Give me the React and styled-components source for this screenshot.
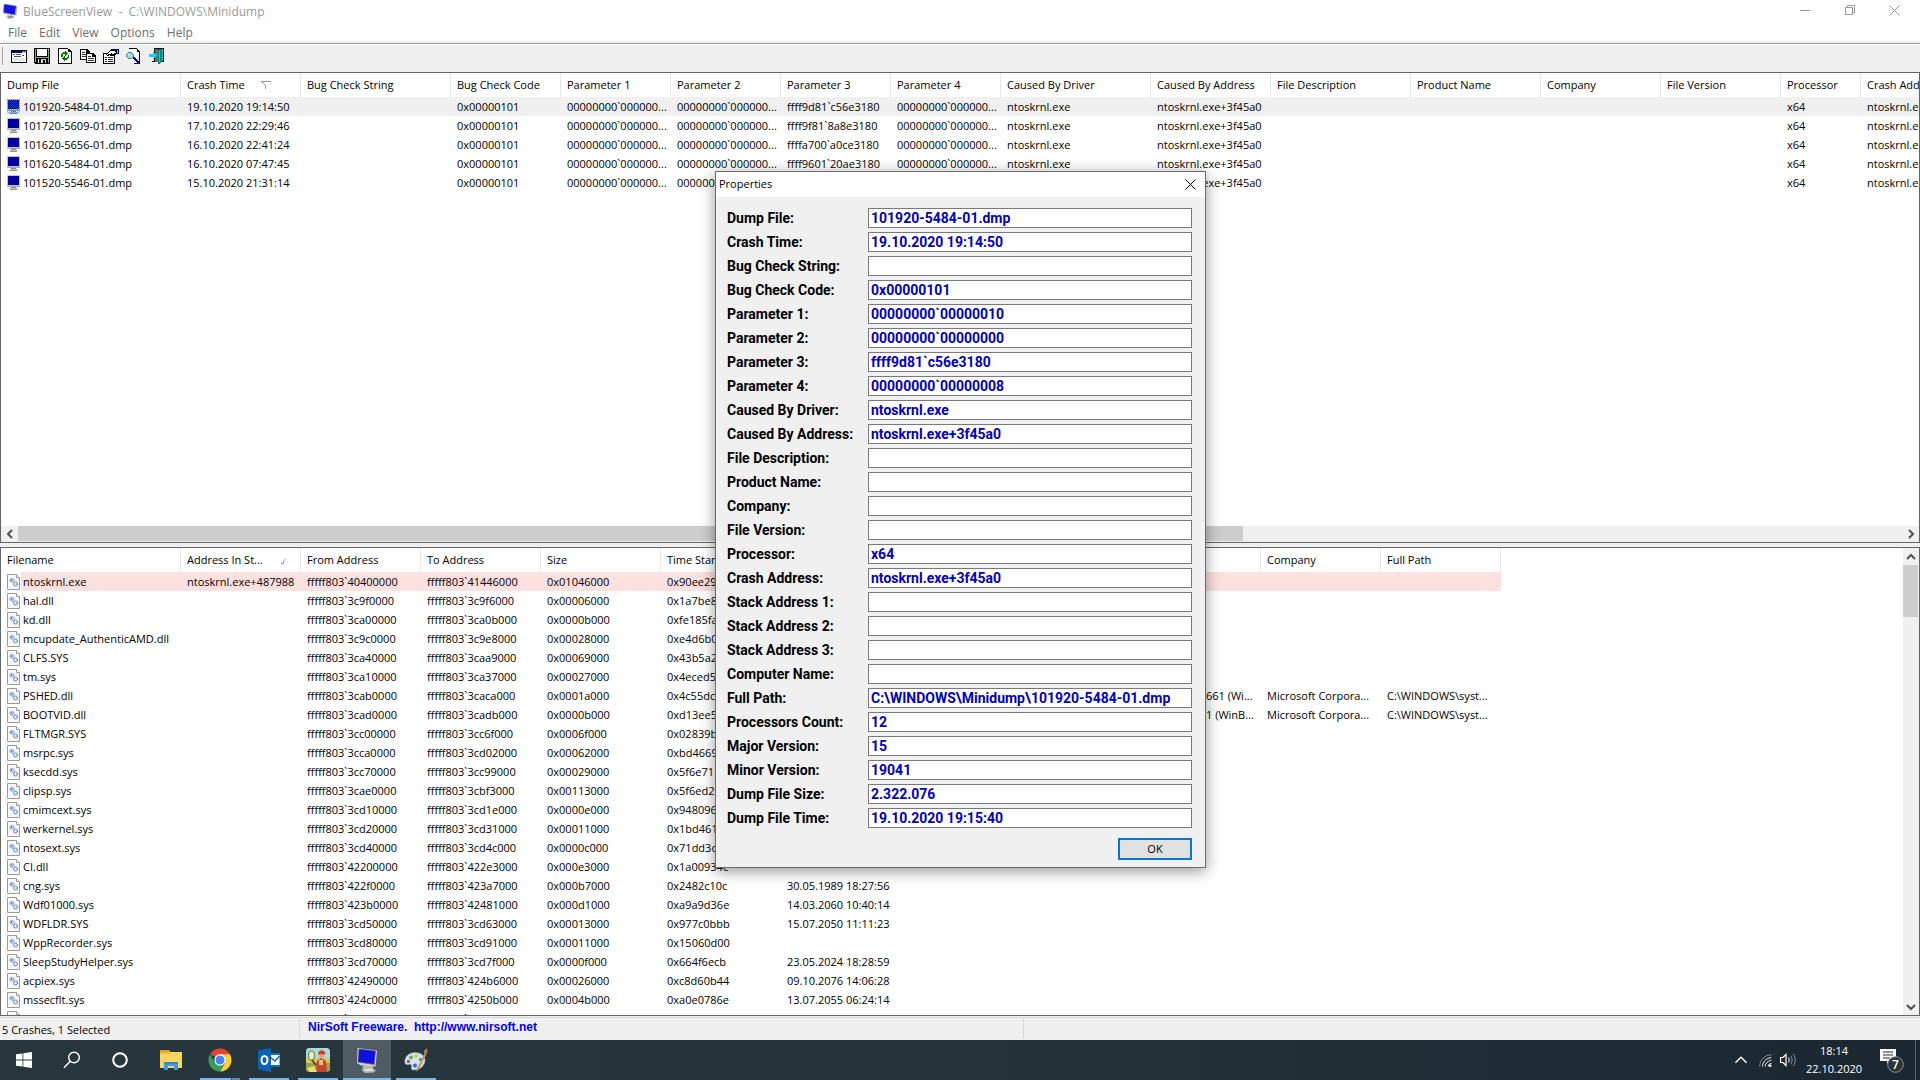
import React from 'react';
import styled, { createGlobalStyle, css } from 'styled-components';

const GlobalStyle = createGlobalStyle`
  *, *::before, *::after { box-sizing: border-box; }
  html, body { margin: 0; padding: 0; }
  body {
    font-family: "Open Sans", "Noto Sans", sans-serif;
    font-size: 11px;
    color: #000;
    background: #f0f0f0;
    overflow: hidden;
  }
  button, input { font: inherit; color: inherit; margin: 0; }
`;

const Screen = styled.div`
  display: flex;
  flex-direction: column;
  height: 100vh;
`;

const Desktop = styled.main`
  position: relative;
  flex: 1 1 0;
  min-height: 0;
  display: flex;
  flex-direction: column;
`;

const BareButton = styled.button`
  border: 0;
  padding: 0;
  background: transparent;
  display: flex;
  align-items: center;
  justify-content: center;
  flex: none;
`;

/* ---------- title bar, menu, toolbar ---------- */

const TitleBar = styled.header`
  display: flex;
  height: 24px;
  padding: 0 3px 0 2px;
  background: #fff;
`;

const TitleIcon = styled.span`
  display: flex;
  align-items: center;
  height: 22px;
`;

const TitleText = styled.h1`
  flex: 1;
  margin: 0;
  padding-left: 5px;
  font-size: 12px;
  line-height: 24px;
  font-weight: 400;
  color: #999;
  white-space: pre;
`;

const CaptionButton = styled(BareButton)`
  width: 45px;
  height: 20px;
`;

const MenuBar = styled.nav`
  display: flex;
  height: 17px;
  padding-left: 2px;
  background: #fff;
`;

const MenuItem = styled(BareButton)`
  padding: 0 6px;
  font-size: 12px;
  color: #6d6d6d;
`;

const ToolBar = styled.div`
  display: flex;
  align-items: center;
  height: 31px;
  padding: 1px 0 4px 2px;
  border-top: 2px solid #f0f0f0;
  background: #f0f0f0;
  box-shadow: inset 0 1px #a0a0a0, inset 0 2px #fff;
`;

const Grip = styled.span`
  width: 1px;
  height: 18px;
  margin-right: 4px;
  background: #a0a0a0;
`;

const ToolButton = styled(BareButton)`
  width: 23px;
  height: 22px;
`;

/* ---------- list panes ---------- */

const Pane = styled.section`
  display: flex;
  flex-direction: ${(p) => (p.$side ? 'row' : 'column')};
  flex: ${(p) => p.$share} 1 0;
  min-height: 0;
  background: #fff;
  border: 1px solid #646464;
`;

const Splitter = styled.div`
  flex: none;
  height: 4px;
  background: #f0f0f0;
`;

const ListArea = styled.div`
  flex: 1 1 0;
  min-width: 0;
  min-height: 0;
  overflow: hidden;
`;

const List = styled.table`
  table-layout: fixed;
  border-collapse: separate;
  border-spacing: 0;
  width: ${(p) => p.$width}px;
`;

const HeadCell = styled.th`
  height: 24px;
  padding: 0 6px;
  border-right: 1px solid #e5e5e5;
  font-weight: 400;
  text-align: left;
  line-height: 16px;
  white-space: nowrap;
`;

const SortMark = styled.svg`
  margin-left: 16px;
`;

const Row = styled.tr`
  background: ${(p) => p.$tint || '#fff'};
`;

const Cell = styled.td`
  height: 19px;
  padding: 0 0 0 6px;
  line-height: 19px;
  white-space: nowrap;
  overflow: hidden;
`;

const NameCell = styled(Cell)`
  padding: 0;
`;

const NameBox = styled.div`
  display: flex;
  gap: 2px;
  height: 19px;
`;

const IconBox = styled.span`
  display: flex;
  align-items: center;
  flex: none;
  width: 20px;
  padding-left: 6px;
  background: #fff;
`;

const ScrollTrack = styled.div`
  display: flex;
  flex: none;
  background: #f0f0f0;
  ${(p) => (p.$vertical
    ? css`flex-direction: column; width: 16px; padding-right: 1px;`
    : css`height: 16px; padding-bottom: 1px;`)}
`;

const ScrollButton = styled(BareButton)`
  width: ${(p) => (p.$vertical ? 15 : 17)}px;
  height: ${(p) => (p.$vertical ? 17 : 15)}px;
`;

const ScrollRun = styled.div`
  flex: 1;
  display: flex;
  flex-direction: ${(p) => (p.$vertical ? 'column' : 'row')};
`;

const ScrollThumb = styled.div`
  flex: 0 0 ${(p) => p.$size}%;
  background: #cdcdcd;
`;

/* ---------- status bar ---------- */

const StatusBar = styled.footer`
  display: flex;
  flex: none;
  height: 24px;
  padding-top: 3px;
  background: #f0f0f0;
  box-shadow: inset 0 1px #f0f0f0, inset 0 2px #d7d7d7;
`;

const StatusPart = styled.div`
  flex: ${(p) => (p.$width ? `0 0 ${p.$width}px` : '1 1 0')};
  height: 20px;
  padding-left: ${(p) => (p.$inset ? 8 : 2)}px;
  border-right: ${(p) => (p.$width ? '1px solid #d7d7d7' : '0')};
  line-height: 22px;
  white-space: nowrap;
`;

const HomeLink = styled.a`
  display: block;
  font: 700 12px/16px "Liberation Sans", Arial, sans-serif;
  color: #0000ff;
  text-decoration: none;
  white-space: pre;
`;

/* ---------- properties dialog ---------- */

const Overlay = styled.div`
  position: absolute;
  inset: 0;
  display: grid;
  place-items: center;
  padding: 0 0 1px 1px;
`;

const Dialog = styled.div`
  width: 491px;
  background: #f0f0f0;
  border: 1px solid #6b6b6b;
  box-shadow: 0 3px 14px rgba(0, 0, 0, 0.42);
`;

const DialogTitle = styled.div`
  display: flex;
  justify-content: space-between;
  height: 25px;
  padding: 0 3px;
  background: #fff;
`;

const DialogHeading = styled.h2`
  margin: 0;
  font-size: 11px;
  line-height: 24px;
  font-weight: 400;
`;

const CloseButton = styled(BareButton)`
  width: 24px;
  height: 24px;
`;

const Form = styled.form`
  display: flex;
  flex-direction: column;
  gap: 4px;
  padding: 11px 13px 7px 11px;
`;

const Field = styled.div`
  display: flex;
  align-items: center;
  height: 20px;
`;

const FieldLabel = styled.label`
  flex: 0 0 141px;
  font: 700 14px/20px Roboto, sans-serif;
  white-space: nowrap;
`;

const FieldInput = styled.input`
  flex: 1;
  min-width: 0;
  height: 20px;
  padding: 0 2px;
  border: 1px solid #7a7a7a;
  background: #fff;
  font: 700 14px/18px Roboto, sans-serif;
  color: #0000bf;
  outline: none;
`;

const OkButton = styled.button`
  align-self: flex-end;
  width: 74px;
  height: 22px;
  margin-top: 6px;
  padding: 0;
  border: 2px solid #0078d7;
  background: #e1e1e1;
  font-size: 11px;
  line-height: 18px;
`;

/* ---------- taskbar ---------- */

const TaskBar = styled.nav`
  display: flex;
  flex: none;
  height: 40px;
  background: linear-gradient(90deg, #28363e, #24323a 50%, #1b2831);
  color: #fff;
`;

const Apps = styled.div`
  display: flex;
  gap: 1px;
  margin-left: 3px;
  flex: 1;
`;

const TaskButton = styled(BareButton)`
  position: relative;
  width: 48px;
  height: 40px;
  background: ${(p) => (p.$active ? '#505c64' : 'transparent')};
  &::after {
    content: "";
    display: ${(p) => (p.$running || p.$active ? 'block' : 'none')};
    position: absolute;
    bottom: 0;
    left: ${(p) => (p.$active ? 0 : 4)}px;
    right: ${(p) => (p.$active ? 0 : 4)}px;
    height: 2px;
    background: ${(p) => (p.$stacked
      ? 'linear-gradient(90deg, #76b9ed 31px, #35536a 31px 32px, #5a8cb3 32px)'
      : '#76b9ed')};
  }
`;

const Tray = styled.div`
  display: flex;
  align-items: center;
`;

const TrayButton = styled(BareButton)`
  width: ${(p) => p.$width}px;
  height: 40px;
`;

const Clock = styled(BareButton)`
  flex-direction: column;
  width: 70px;
  height: 40px;
  line-height: 18px;
`;

const ShowDesktop = styled(BareButton)`
  width: 5px;
  height: 40px;
  border-left: 1px solid #5c6870;
`;

/* ---------- drawings ---------- */

const Px = ({ w = 16, h = 16, children }) => (
  <svg width={w} height={h} viewBox={`0 0 ${w} ${h}`} shapeRendering="crispEdges" aria-hidden="true">
    {children}
  </svg>
);

const AppIcon = ({ size = 16 }) => (
  <svg width={size} height={size} viewBox="0 0 16 16" aria-hidden="true">
    <path d="M5 12.500l5-.5 2 2.500-5 1.300-2.500-1z" fill="#b9b9b4" />
    <path d="M6 13.500l5-.6 1 1.400-5 1.200z" fill="#8b8b88" />
    <path d="M1.600 1.200L14 3l.8 9L3 11.600 1.200 10z" fill="#c8c8c4" />
    <path d="M2.200 1l12 2.100-1.400 8.800L1.500 9.600z" fill="#1414e6" stroke="#8a8aa0" strokeWidth=".5" />
    <path d="M14.300 3l.9.600-1.400 9-1-.700z" fill="#9b9b98" />
  </svg>
);

const DumpIcon = ({ dotted }) => (
  <Px w={13} h={15}>
    <rect width="13" height="12" fill="#c3c3bd" />
    <rect x="1" y="1" width="11" height="9" fill="#0000a0" />
    <rect x="0" y="11" width="13" height="1" fill="#a9a9a4" />
    <rect x="4" y="12" width="5" height="1" fill="#8c8c88" />
    <rect x="2" y="13" width="9" height="1" fill="#c3c3bd" />
    <rect x="3" y="14" width="7" height="1" fill="#94948f" />
    {dotted && Array.from({ length: 15 }, (_, y) =>
      Array.from({ length: 7 }, (_, x) => (
        <rect key={`${x}-${y}`} x={x * 2 + (y % 2)} y={y} width="1" height="1"
          fill="#0078d7" opacity="0.55" />
      )))}
  </Px>
);

const FileIcon = () => (
  <svg width="13" height="16" viewBox="0 0 13 16" aria-hidden="true">
    <path d="M.5.5h9l3 3v12H.5z" fill="#f8f8f8" stroke="#9a9a9a" />
    <path d="M9.500.5v3h3" fill="#fff" stroke="#9a9a9a" />
    <circle cx="5" cy="6.300" r="2" fill="#cfe0f4" stroke="#4a78b4" strokeDasharray="1 .6" />
    <circle cx="8.500" cy="10" r="2" fill="#cfe0f4" stroke="#2c5c9c" strokeDasharray="1.200 .5" />
    <circle cx="4.600" cy="6" r=".7" fill="#2c5c9c" />
    <circle cx="8.500" cy="10" r=".6" fill="#fff" />
  </svg>
);

const toolIcons = {
  'Advanced options': (
    <Px>
      <rect x="0" y="2" width="16" height="13" fill="#000" />
      <rect x="1" y="3" width="14" height="11" fill="#fff" />
      <rect x="1" y="3" width="10" height="2" fill="#000080" />
      <rect x="11" y="3" width="4" height="2" fill="#c0c0c0" />
      <path d="M11 3h1v1h-1zM13 3h1v1h-1z" fill="#000" />
      <path d="M2 6h2v1H2zM5 6h5v1H5zM11 7h2v1h-2zM3 8h7v1H3z" fill="#555" />
      <rect x="2" y="10" width="12" height="3" fill="#e8e8e8" />
      <path d="M1 9h14v1H1z" fill="#fff" />
    </Px>
  ),
  Save: (
    <Px>
      <path d="M0 0h16v16H1L0 15z" fill="#000" />
      <rect x="3" y="1" width="10" height="7" fill="#fff" />
      <path d="M1 1h1v13H1zM14 2h1v13h-1zM2 9h12v1H2z" fill="#999" />
      <rect x="4" y="11" width="8" height="4" fill="#d0d0d0" />
      <path d="M5 11h2v4H5zM9 12h2v3H9z" fill="#000" />
      <rect x="14" y="1" width="1" height="1" fill="#fff" />
    </Px>
  ),
  Refresh: (
    <Px w={14}>
      <path d="M1 0h9l3 3v13H1z" fill="#fff" />
      <path d="M1 0h9v1H1zM0 0h1v16H0zM0 15h13v1H0zM13 4h1v12h-1zM9 1h1v3h4V3h-1V2h-1V1h-2z" fill="#000" />
      <path d="M4 5h1V4h2V3h1v1h1v1h1v1H9v1H8v1H7V6H5v3H3V6h1z" fill="#007a00" />
      <path d="M10 7h1v3h-1v1H9v1H7v1H6v-1H5v-1H4v-1h1V9h1V8h1v2h2V9h1z" fill="#007a00" />
    </Px>
  ),
  Copy: (
    <Px>
      <path d="M0 1h7l3 3v8H0z" fill="#000" />
      <path d="M1 2h5v3h3v6H1z" fill="#fff" />
      <path d="M2 4h3v1H2zM2 6h5v1H2zM2 8h5v1H2z" fill="#333" />
      <path d="M6 5h7l3 3v7H6z" fill="#000" />
      <path d="M7 6h5v3h3v5H7z" fill="#fff" />
      <path d="M8 8h3v1H8zM8 10h6v1H8zM8 12h6v1H8z" fill="#333" />
    </Px>
  ),
  Properties: (
    <Px>
      <path d="M0 5h12v11H0z" fill="#000" />
      <path d="M1 6h10v9H1z" fill="#fff" />
      <path d="M2 9h2v1H2zM5 9h5v1H5zM2 11h2v1H2zM5 11h5v1H5zM2 13h2v1H2zM5 13h5v1H5z" fill="#222" />
      <path d="M3 6h1V5h1V4h1V3h1V2h1V1h5v1h2v4h-2v1h-2v1H7V7H6v1H4V7H3z" fill="#000" />
      <path d="M4 6h1V5h1V4h1V3h5v1h1v1h-2v1H9V5H8v1H5v1H4z" fill="#fff" />
      <path d="M13 1h3v5h-3z" fill="#000080" />
      <path d="M14 2h1v3h-1z" fill="#8fa0e8" />
    </Px>
  ),
  Find: (
    <Px>
      <path d="M3 0h8l3 3v12H3z" fill="#fff" />
      <path d="M3 0h8v1H3zM13 4h1v11h-1zM8 15h6v1H8zM10 1h1v3h3V3h-1V2h-1V1z" fill="#000" />
      <path d="M2 4h4v1h1v1h1v3H7v1H6v1H2v-1H1V9H0V6h1V5h1z" fill="#808080" />
      <path d="M2 5h4v1h1v3H6v1H2V9H1V6h1z" fill="#6fe4ea" />
      <path d="M3 6h1v1H3zM2 7h1v1H2zM5 7h1v1H5zM4 8h1v1H4z" fill="#fff" />
      <path d="M7 9h2v1h1v1h1v1h1v1h1v2h-2v-1h-1v-1H9v-1H8v-1H7z" fill="#0000c8" />
    </Px>
  ),
  Exit: (
    <Px>
      <path d="M5 0h10v14H5z" fill="#000" />
      <path d="M6 1h3v13H6z" fill="#6a6a6a" />
      <path d="M9 2h1V1h4v12h-1v1h-1v1h-1v1H9z" fill="#008a8a" />
      <path d="M10 3h1v11h-1zM13 1h1v12h-1z" fill="#30c0c0" />
      <path d="M0 6h4V4h1v1h1v1h1v1h1v1H7v1H6v1H5v1H4V9H0z" fill="#00e0e8" />
      <path d="M3 13h3v1H3z" fill="#000" />
    </Px>
  ),
};

const chevrons = {
  left: 'M7 1L3 5l4 4',
  right: 'M3 1l4 4-4 4',
  up: 'M1 7l4-4 4 4',
  down: 'M1 3l4 4 4-4',
};

const Chevron = ({ dir, ink = '#505050', size = 10, weight = 2 }) => (
  <svg width={size} height={size} viewBox="0 0 10 10" fill="none" stroke={ink} strokeWidth={weight} aria-hidden="true">
    <path d={chevrons[dir]} />
  </svg>
);

const Cross = ({ size, ink }) => (
  <svg width={size} height={size} viewBox="0 0 11 11" stroke={ink} fill="none" aria-hidden="true">
    <path d="M.5.5l10 10M10.500.5l-10 10" />
  </svg>
);

const StartGlyph = () => (
  <svg width="16" height="16" viewBox="0 0 16 16" fill="#fff" aria-hidden="true">
    <path d="M0 2.300L6.500 1.400v6.200H0zM7.300 1.300L16 0v7.600H7.300zM0 8.400h6.500v6.200L0 13.700zM7.300 8.400H16V16l-8.700-1.300z" />
  </svg>
);

const SearchGlyph = () => (
  <svg width="18" height="18" viewBox="0 0 18 18" fill="none" stroke="#fff" strokeWidth="1.400" aria-hidden="true">
    <circle cx="11" cy="6.500" r="5.300" />
    <path d="M7.200 10.300L1 16.800" />
  </svg>
);

const CortanaGlyph = () => (
  <svg width="16" height="16" viewBox="0 0 16 16" fill="none" stroke="#fff" strokeWidth="2" aria-hidden="true">
    <circle cx="8" cy="8" r="6.800" />
  </svg>
);

const ExplorerGlyph = () => (
  <svg width="22" height="20" viewBox="0 0 22 20" aria-hidden="true">
    <path d="M0 0h9l1.500 2H0z" fill="#e0a21c" />
    <path d="M0 2h22v16H0z" fill="#fcd462" />
    <path d="M0 2h9l2 2H0z" fill="#f0b93a" />
    <path d="M4 12h14v8h-4v-4H8v4H4z" fill="#3d9be0" />
    <path d="M4 12h14v2H4z" fill="#2f87cc" />
  </svg>
);

const ChromeGlyph = () => (
  <svg width="24" height="24" viewBox="0 0 24 24" aria-hidden="true">
    <path d="M12 12L2.040 6.250A11.500 11.500 0 0 1 21.960 6.250z" fill="#e24335" />
    <path d="M12 12V6.250h9.960A11.500 11.500 0 0 1 12 23.500l4.980-8.620z" fill="#fccd3a" />
    <path d="M12 12l4.980 2.880L12 23.500A11.500 11.500 0 0 1 2.040 6.250l4.980 8.620z" fill="#36a156" />
    <circle cx="12" cy="12" r="5.700" fill="#fff" />
    <circle cx="12" cy="12" r="4.500" fill="#4285f4" />
  </svg>
);

const OutlookGlyph = () => (
  <svg width="24" height="24" viewBox="0 0 24 24" aria-hidden="true">
    <path d="M12 5h11v14H12z" fill="#0f6cbd" />
    <path d="M13 7h9.500v10H13z" fill="#fff" />
    <path d="M13 9l5 4 4.500-5" fill="none" stroke="#0f6cbd" strokeWidth="1.600" />
    <path d="M1 2.500L14 0v24L1 21.500z" fill="#0a63b4" />
    <ellipse cx="7.500" cy="12" rx="3" ry="4" fill="none" stroke="#fff" strokeWidth="2" />
  </svg>
);

const GameGlyph = () => (
  <svg width="24" height="24" viewBox="0 0 24 24" aria-hidden="true">
    <rect width="24" height="24" rx="4" fill="#d9c46a" />
    <path d="M0 4a4 4 0 0 1 4-4h16a4 4 0 0 1 4 4v6H0z" fill="#a9dcd8" />
    <path d="M0 15h24v5a4 4 0 0 1-4 4H4a4 4 0 0 1-4-4z" fill="#8fa84a" />
    <path d="M10 24l1-11 4-3 5 3 1 11z" fill="#c8452c" />
    <circle cx="15.500" cy="6.500" r="3.200" fill="#e8a070" />
    <path d="M12 5.500c1-4.500 6.500-4.500 7.500 0l-1 .8h-5.500z" fill="#d23c1e" />
    <ellipse cx="5.500" cy="7.500" rx="3" ry="4.500" fill="#e8ecc0" stroke="#58702c" />
    <path d="M6 12l4 5" stroke="#7a3c20" strokeWidth="2" />
    <path d="M13 12h4v5h-4z" fill="#f0c08a" />
    <path d="M1 20l7-2 3 6H4z" fill="#e8e070" />
  </svg>
);

const BlueScreenGlyph = () => (
  <svg width="24" height="26" viewBox="0 0 24 26" aria-hidden="true">
    <path d="M8 19l10-1v4l3 1-2 2.500-9 .5-3-2.500z" fill="#b4b4ae" />
    <path d="M9 22l9-.5.5 2-8 1z" fill="#e0e0dc" />
    <path d="M2.500 1L22 3.500l-1.500 16L6 18.500 2 16z" fill="#d0d0ca" />
    <path d="M4 2l16.500 2-1.300 13.500L3 15z" fill="#1010e0" stroke="#60606c" strokeWidth=".6" />
  </svg>
);

const PaintGlyph = () => (
  <svg width="24" height="24" viewBox="0 0 24 24" aria-hidden="true">
    <path d="M11 4.500c6 0 10.500 3.500 10 8.500-.5 5-5.500 9-11 9-3 0-3-2-2.500-3.500.5-2-1-2.500-3-2C2 17 .5 16 .8 13 1.300 8 5.500 4.500 11 4.500z" fill="#cfe4f2" stroke="#7fa6bf" strokeWidth=".6" />
    <circle cx="7" cy="9.500" r="1.900" fill="#58b84c" />
    <circle cx="12" cy="8" r="1.900" fill="#f0c030" />
    <circle cx="4.500" cy="13.500" r="1.700" fill="#d8442c" />
    <circle cx="16.500" cy="11.500" r="1.700" fill="#4a8cd8" />
    <circle cx="11" cy="17.500" r="1.900" fill="#3068c0" />
    <path d="M20.500 5.500l1.700 1.200L14 22.500l-1.600.9.200-2z" fill="#d98a35" />
    <path d="M20 5.500c-.8-2 .5-4 3-5.500.8 3 .6 5.300-1 6.800z" fill="#a77a50" />
  </svg>
);

const WifiGlyph = () => (
  <svg width="13" height="13" viewBox="0 0 13 13" fill="none" stroke="#fff" aria-hidden="true">
    <path d="M.6 12.500A11.800 11.800 0 0 1 12.400.7" opacity=".45" />
    <path d="M3.500 12.500a9 9 0 0 1 8.900-8.900M6.300 12.500a6.200 6.200 0 0 1 6.100-6.100" opacity=".85" />
    <path d="M9.300 12.500a3.200 3.200 0 0 1 3.100-3.100" />
    <circle cx="11.300" cy="11.800" r="1.200" fill="#fff" stroke="none" />
  </svg>
);

const SpeakerGlyph = () => (
  <svg width="17" height="14" viewBox="0 0 17 14" fill="none" stroke="#fff" aria-hidden="true">
    <path d="M.6 4.500h2.400l3-3v11l-3-3H.6z" strokeWidth="1.200" />
    <path d="M8.300 4.500c1.200 1.600 1.200 3.400 0 5" />
    <path d="M10.600 2.800c2 2.600 2 5.800 0 8.400M13 1c3 3.600 3 8.400 0 12" opacity=".45" />
  </svg>
);

const NoticeGlyph = () => (
  <svg width="26" height="26" viewBox="0 0 26 26" aria-hidden="true">
    <path d="M1 2h16v12h-6l-3 3v-3H1z" fill="#fff" />
    <path d="M4 5h10M4 8h10M4 11h7" stroke="#1d2a32" />
    <circle cx="16.500" cy="17.500" r="7.800" fill="#2b3338" stroke="#8c959a" />
    <text x="16.500" y="22" textAnchor="middle" fontFamily="Open Sans, sans-serif" fontSize="12" fontWeight="600" fill="#fff">7</text>
  </svg>
);

/* ---------- data ---------- */

const crashColumns = [
  ['Dump File', 180], ['Crash Time', 120], ['Bug Check String', 150], ['Bug Check Code', 110],
  ['Parameter 1', 110], ['Parameter 2', 110], ['Parameter 3', 110], ['Parameter 4', 110],
  ['Caused By Driver', 150], ['Caused By Address', 120], ['File Description', 140],
  ['Product Name', 130], ['Company', 120], ['File Version', 120], ['Processor', 80], ['Crash Address', 120],
];

const crashes = [
  ['101920-5484-01.dmp', '19.10.2020 19:14:50', 'ffff9d81`c56e3180'],
  ['101720-5609-01.dmp', '17.10.2020 22:29:46', 'ffff9f81`8a8e3180'],
  ['101620-5656-01.dmp', '16.10.2020 22:41:24', 'ffffa700`a0ce3180'],
  ['101620-5484-01.dmp', '16.10.2020 07:47:45', 'ffff9601`20ae3180'],
  ['101520-5546-01.dmp', '15.10.2020 21:31:14', 'ffffb581`e1ce3180'],
].map(([name, time, third]) => [
  name, time, '', '0x00000101', '00000000`000000...', '00000000`000000...', third,
  '00000000`000000...', 'ntoskrnl.exe', 'ntoskrnl.exe+3f45a0', '', '', '', '', 'x64', 'ntoskrnl.exe+3f45a0',
]);

const moduleColumns = [
  ['Filename', 180], ['Address In St...', 120], ['From Address', 120], ['To Address', 120], ['Size', 120],
  ['Time Stamp', 120], ['Time String', 120], ['Product Name', 120], ['File Description', 120],
  ['File Version', 120], ['Company', 120], ['Full Path', 120],
];

const ms = 'Microsoft® Wind...';
const modules = [
  ['ntoskrnl.exe', 'ntoskrnl.exe+487988', '40400000', '41446000', '01046000', '90ee29c4'],
  ['hal.dll', '', '3c9f0000', '3c9f6000', '00006000', '1a7be8d2'],
  ['kd.dll', '', '3ca00000', '3ca0b000', '0000b000', 'fe185fa1'],
  ['mcupdate_AuthenticAMD.dll', '', '3c9c0000', '3c9e8000', '00028000', 'e4d6b031'],
  ['CLFS.SYS', '', '3ca40000', '3caa9000', '00069000', '43b5a2e1'],
  ['tm.sys', '', '3ca10000', '3ca37000', '00027000', '4eced5a7'],
  ['PSHED.dll', '', '3cab0000', '3caca000', '0001a000', '4c55dc10', '', ms, 'Platform Specifi...', '10.0.19041.661 (Wi...', 'Microsoft Corpora...', 'C:\\WINDOWS\\syst...'],
  ['BOOTVID.dll', '', '3cad0000', '3cadb000', '0000b000', 'd13ee5b2', '', ms, 'VGA Boot Driver', '10.0.19041.1 (WinB...', 'Microsoft Corpora...', 'C:\\WINDOWS\\syst...'],
  ['FLTMGR.SYS', '', '3cc00000', '3cc6f000', '0006f000', '02839b5c'],
  ['msrpc.sys', '', '3cca0000', '3cd02000', '00062000', 'bd466932'],
  ['ksecdd.sys', '', '3cc70000', '3cc99000', '00029000', '5f6e7117'],
  ['clipsp.sys', '', '3cae0000', '3cbf3000', '00113000', '5f6ed2fa'],
  ['cmimcext.sys', '', '3cd10000', '3cd1e000', '0000e000', '948096a3'],
  ['werkernel.sys', '', '3cd20000', '3cd31000', '00011000', '1bd46131'],
  ['ntosext.sys', '', '3cd40000', '3cd4c000', '0000c000', '71dd3c5e'],
  ['CI.dll', '', '42200000', '422e3000', '000e3000', '1a00934c'],
  ['cng.sys', '', '422f0000', '423a7000', '000b7000', '2482c10c', '30.05.1989 18:27:56'],
  ['Wdf01000.sys', '', '423b0000', '42481000', '000d1000', 'a9a9d36e', '14.03.2060 10:40:14'],
  ['WDFLDR.SYS', '', '3cd50000', '3cd63000', '00013000', '977c0bbb', '15.07.2050 11:11:23'],
  ['WppRecorder.sys', '', '3cd80000', '3cd91000', '00011000', '15060d00'],
  ['SleepStudyHelper.sys', '', '3cd70000', '3cd7f000', '0000f000', '664f6ecb', '23.05.2024 18:28:59'],
  ['acpiex.sys', '', '42490000', '424b6000', '00026000', 'c8d60b44', '09.10.2076 14:06:28'],
  ['mssecflt.sys', '', '424c0000', '4250b000', '0004b000', 'a0e0786e', '13.07.2055 06:24:14'],
  ['SgrmAgent.sys', '', '3cda0000', '3cdba000', '0001a000', '9a247471', '07.08.2053 20:43:24'],
].map(([name, stack, from, to, size, stamp, ...rest]) => [
  name, stack, `fffff803\`${from}`, `fffff803\`${to}`, `0x${size}`, `0x${stamp}`,
  ...Array.from({ length: 6 }, (_, i) => rest[i] || ''),
]);

const fields = [
  ['Dump File', '101920-5484-01.dmp'], ['Crash Time', '19.10.2020 19:14:50'], ['Bug Check String', ''],
  ['Bug Check Code', '0x00000101'], ['Parameter 1', '00000000`00000010'], ['Parameter 2', '00000000`00000000'],
  ['Parameter 3', 'ffff9d81`c56e3180'], ['Parameter 4', '00000000`00000008'], ['Caused By Driver', 'ntoskrnl.exe'],
  ['Caused By Address', 'ntoskrnl.exe+3f45a0'], ['File Description', ''], ['Product Name', ''], ['Company', ''],
  ['File Version', ''], ['Processor', 'x64'], ['Crash Address', 'ntoskrnl.exe+3f45a0'], ['Stack Address 1', ''],
  ['Stack Address 2', ''], ['Stack Address 3', ''], ['Computer Name', ''],
  ['Full Path', 'C:\\WINDOWS\\Minidump\\101920-5484-01.dmp'], ['Processors Count', '12'], ['Major Version', '15'],
  ['Minor Version', '19041'], ['Dump File Size', '2.322.076'], ['Dump File Time', '19.10.2020 19:15:40'],
];

/* ---------- parts ---------- */

function ListTable({ columns, rows, tint, sorted, mark, icon }) {
  return (
    <List $width={columns.reduce((sum, c) => sum + c[1], 0)}>
      <colgroup>
        {columns.map(([label, width]) => <col key={label} style={{ width }} />)}
      </colgroup>
      <thead>
        <tr>
          {columns.map(([label]) => (
            <HeadCell key={label} scope="col">{label}{label === sorted && mark}</HeadCell>
          ))}
        </tr>
      </thead>
      <tbody>
        {rows.map((row, r) => (
          <Row key={row[0] + row[1]} $tint={r === 0 ? tint : undefined}>
            <NameCell><NameBox><IconBox>{icon(r)}</IconBox>{row[0]}</NameBox></NameCell>
            {row.slice(1).map((text, c) => <Cell key={c}>{text}</Cell>)}
          </Row>
        ))}
      </tbody>
    </List>
  );
}

function ScrollBar({ vertical, size }) {
  return (
    <ScrollTrack $vertical={vertical}>
      <ScrollButton type="button" $vertical={vertical} aria-label={vertical ? 'Scroll up' : 'Scroll left'}>
        <Chevron dir={vertical ? 'up' : 'left'} />
      </ScrollButton>
      <ScrollRun $vertical={vertical}><ScrollThumb $size={size} /></ScrollRun>
      <ScrollButton type="button" $vertical={vertical} aria-label={vertical ? 'Scroll down' : 'Scroll right'}>
        <Chevron dir={vertical ? 'down' : 'right'} />
      </ScrollButton>
    </ScrollTrack>
  );
}

function PropertiesDialog() {
  return (
    <Overlay>
      <Dialog role="dialog" aria-labelledby="properties-title">
        <DialogTitle>
          <DialogHeading id="properties-title">Properties</DialogHeading>
          <CloseButton type="button" aria-label="Close properties"><Cross size={11} ink="#000" /></CloseButton>
        </DialogTitle>
        <Form onSubmit={(e) => e.preventDefault()}>
          {fields.map(([label, value], i) => (
            <Field key={label}>
              <FieldLabel htmlFor={`field-${i}`}>{label}:</FieldLabel>
              <FieldInput id={`field-${i}`} type="text" readOnly value={value} />
            </Field>
          ))}
          <OkButton type="submit">OK</OkButton>
        </Form>
      </Dialog>
    </Overlay>
  );
}

export default function App() {
  return (
    <Screen>
      <GlobalStyle />
      <Desktop>
        <TitleBar>
          <TitleIcon><AppIcon /></TitleIcon>
          <TitleText>{'BlueScreenView  -  C:\\WINDOWS\\Minidump'}</TitleText>
          <CaptionButton type="button" aria-label="Minimize">
            <svg width="10" height="10" stroke="#999" aria-hidden="true"><path d="M0 5.500h10" /></svg>
          </CaptionButton>
          <CaptionButton type="button" aria-label="Restore">
            <svg width="10" height="10" fill="none" stroke="#999" aria-hidden="true">
              <path d="M.5 2.500h7v7h-7zM2.500 2.500v-2h7v7h-2" />
            </svg>
          </CaptionButton>
          <CaptionButton type="button" aria-label="Close"><Cross size={11} ink="#999" /></CaptionButton>
        </TitleBar>
        <MenuBar>
          {['File', 'Edit', 'View', 'Options', 'Help'].map((m) => <MenuItem key={m} type="button">{m}</MenuItem>)}
        </MenuBar>
        <ToolBar>
          <Grip />
          {Object.entries(toolIcons).map(([name, drawing]) => (
            <ToolButton key={name} type="button" aria-label={name}>{drawing}</ToolButton>
          ))}
        </ToolBar>
        <Pane $share={471}>
          <ListArea>
            <ListTable
              columns={crashColumns} rows={crashes} tint="#f0f0f0" sorted="Crash Time"
              mark={<SortMark width="10" height="8" fill="none" stroke="#999" aria-hidden="true"><path d="M0 .5h10M1 1l3.500 3v4" /></SortMark>}
              icon={(r) => <DumpIcon dotted={r === 0} />}
            />
          </ListArea>
          <ScrollBar size={65} />
        </Pane>
        <Splitter />
        <Pane $share={469} $side>
          <ListArea>
            <ListTable
              columns={moduleColumns} rows={modules} tint="#fde0e0" sorted="Address In St..."
              mark={<SortMark width="8" height="6" fill="none" stroke="#999" aria-hidden="true"><path d="M2 5.500h2.500V3L7 .5" /></SortMark>}
              icon={() => <FileIcon />}
            />
          </ListArea>
          <ScrollBar vertical size={12} />
        </Pane>
        <StatusBar>
          <StatusPart $width={300}>5 Crashes, 1 Selected</StatusPart>
          <StatusPart $width={724} $inset>
            <HomeLink href="#nirsoft">{'NirSoft Freeware.  http://www.nirsoft.net'}</HomeLink>
          </StatusPart>
          <StatusPart />
        </StatusBar>
        <PropertiesDialog />
      </Desktop>
      <TaskBar>
        <TaskButton type="button" aria-label="Start"><StartGlyph /></TaskButton>
        <TaskButton type="button" aria-label="Search"><SearchGlyph /></TaskButton>
        <TaskButton type="button" aria-label="Cortana"><CortanaGlyph /></TaskButton>
        <Apps>
          <TaskButton type="button" aria-label="File Explorer"><ExplorerGlyph /></TaskButton>
          <TaskButton type="button" aria-label="Chrome" $running $stacked><ChromeGlyph /></TaskButton>
          <TaskButton type="button" aria-label="Outlook" $running><OutlookGlyph /></TaskButton>
          <TaskButton type="button" aria-label="Game" $running><GameGlyph /></TaskButton>
          <TaskButton type="button" aria-label="BlueScreenView" $active><BlueScreenGlyph /></TaskButton>
          <TaskButton type="button" aria-label="Paint" $running><PaintGlyph /></TaskButton>
        </Apps>
        <Tray>
          <TrayButton type="button" $width={24} aria-label="Hidden icons"><Chevron dir="up" ink="#fff" size={14} weight={1} /></TrayButton>
          <TrayButton type="button" $width={24} aria-label="Network"><WifiGlyph /></TrayButton>
          <TrayButton type="button" $width={22} aria-label="Volume"><SpeakerGlyph /></TrayButton>
          <Clock type="button"><span>18:14</span><span>22.10.2020</span></Clock>
          <TrayButton type="button" $width={46} aria-label="Notifications"><NoticeGlyph /></TrayButton>
          <ShowDesktop type="button" aria-label="Show desktop" />
        </Tray>
      </TaskBar>
    </Screen>
  );
}
